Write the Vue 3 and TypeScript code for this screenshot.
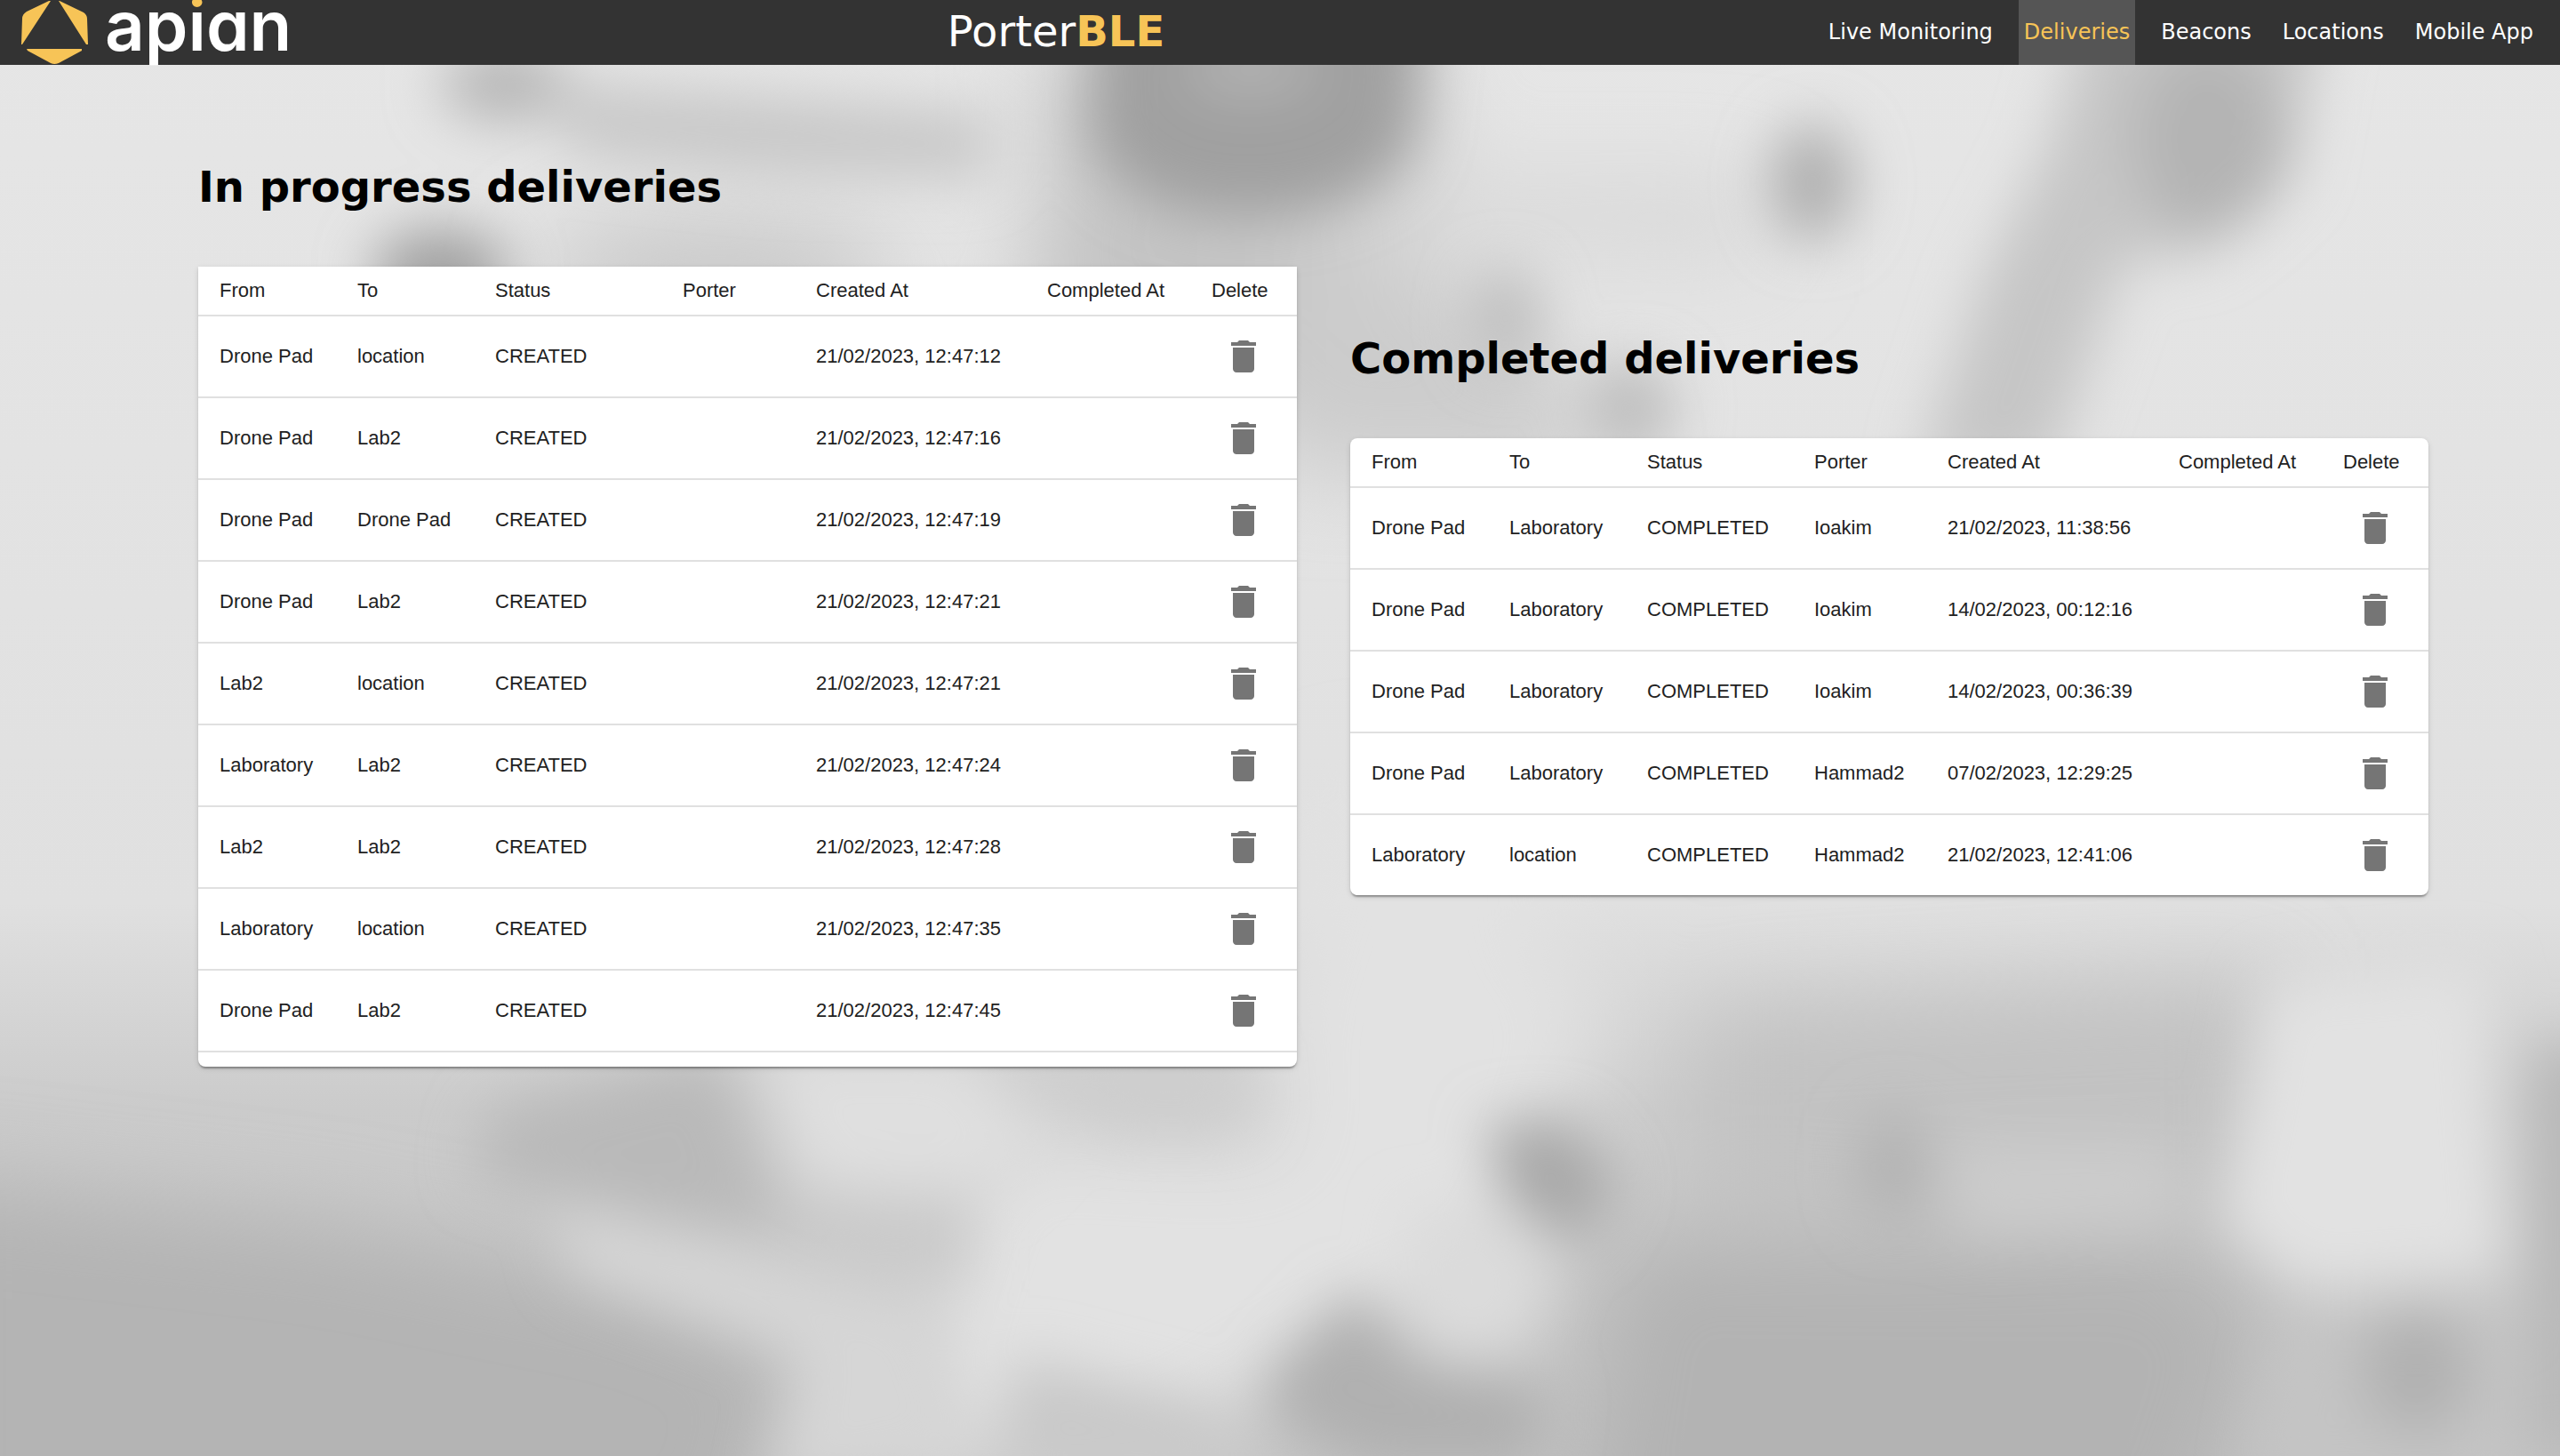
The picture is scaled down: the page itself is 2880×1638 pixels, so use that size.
<script setup lang="ts">
interface Delivery {
  from: string
  to: string
  status: string
  porter: string
  createdAt: string
  completedAt: string
}

interface Panel {
  id: string
  title: string
  rows: Delivery[]
}

const links: string[] = ['Live Monitoring', 'Deliveries', 'Beacons', 'Locations', 'Mobile App']
const active = 'Deliveries'

const headings: string[] = ['From', 'To', 'Status', 'Porter', 'Created At', 'Completed At', 'Delete']

function delivery(from: string, to: string, status: string, porter: string, createdAt: string): Delivery {
  return { from, to, status, porter, createdAt, completedAt: '' }
}

const panels: Panel[] = [
  {
    id: 'progress',
    title: 'In progress deliveries',
    rows: [
      delivery('Drone Pad', 'location', 'CREATED', '', '21/02/2023, 12:47:12'),
      delivery('Drone Pad', 'Lab2', 'CREATED', '', '21/02/2023, 12:47:16'),
      delivery('Drone Pad', 'Drone Pad', 'CREATED', '', '21/02/2023, 12:47:19'),
      delivery('Drone Pad', 'Lab2', 'CREATED', '', '21/02/2023, 12:47:21'),
      delivery('Lab2', 'location', 'CREATED', '', '21/02/2023, 12:47:21'),
      delivery('Laboratory', 'Lab2', 'CREATED', '', '21/02/2023, 12:47:24'),
      delivery('Lab2', 'Lab2', 'CREATED', '', '21/02/2023, 12:47:28'),
      delivery('Laboratory', 'location', 'CREATED', '', '21/02/2023, 12:47:35'),
      delivery('Drone Pad', 'Lab2', 'CREATED', '', '21/02/2023, 12:47:45'),
    ],
  },
  {
    id: 'completed',
    title: 'Completed deliveries',
    rows: [
      delivery('Drone Pad', 'Laboratory', 'COMPLETED', 'Ioakim', '21/02/2023, 11:38:56'),
      delivery('Drone Pad', 'Laboratory', 'COMPLETED', 'Ioakim', '14/02/2023, 00:12:16'),
      delivery('Drone Pad', 'Laboratory', 'COMPLETED', 'Ioakim', '14/02/2023, 00:36:39'),
      delivery('Drone Pad', 'Laboratory', 'COMPLETED', 'Hammad2', '07/02/2023, 12:29:25'),
      delivery('Laboratory', 'location', 'COMPLETED', 'Hammad2', '21/02/2023, 12:41:06'),
    ],
  },
]
</script>

<template>
  <div class="page">
    <svg class="backdrop" viewBox="0 0 1568 892" preserveAspectRatio="xMidYMid slice" aria-hidden="true">
      <defs>
        <linearGradient id="base" x1="0" y1="0" x2="0" y2="1">
          <stop offset="0" stop-color="#e6e6e6" />
          <stop offset="0.62" stop-color="#e0e0e0" />
          <stop offset="0.76" stop-color="#cbcbcb" />
          <stop offset="1" stop-color="#c4c4c4" />
        </linearGradient>
        <filter id="soft" x="-60%" y="-60%" width="220%" height="220%"><feGaussianBlur stdDeviation="17" /></filter>
        <filter id="wide" x="-60%" y="-60%" width="220%" height="220%"><feGaussianBlur stdDeviation="28" /></filter>
      </defs>
      <rect width="1568" height="892" fill="url(#base)" />
      <g filter="url(#wide)">
        <path d="M640 30L880 30L860 180L790 260L620 200L640 130Z" fill="#c4c4c4" />
        <ellipse cx="440" cy="168" rx="110" ry="34" fill="#c8c8c8" />
        <path d="M780 140L860 150L960 230L990 290L780 290Z" fill="#cccccc" />
        <path d="M800 110L1080 110L1080 160L830 150Z" fill="#d8d8d8" />
        <path d="M-60 720L200 750L400 790L490 830L450 960L-60 960Z" fill="#b4b4b4" />
        <path d="M1040 620L1390 600L1390 760L1040 740Z" fill="#c2c2c2" />
        <path d="M990 760L1340 765L1390 810L1340 960L960 960Z" fill="#b3b3b3" />
        <path d="M600 690L800 700L900 560L990 600L930 780L780 850L720 892L540 892Z" fill="#e2e2e2" />
        <path d="M820 480L960 480L900 740L800 760L770 640Z" fill="#e2e2e2" />
      </g>
      <g filter="url(#soft)">
        <ellipse cx="310" cy="52" rx="40" ry="22" fill="#b4b4b4" />
        <path d="M330 50L450 58L610 70L605 110L480 108L350 95Z" fill="#c8c8c8" />
        <path d="M670 0L874 0L864 90Q835 132 764 132Q690 132 668 84Z" fill="#a0a0a0" />
        <ellipse cx="766" cy="42" rx="40" ry="16" fill="#b4b4b4" />
        <ellipse cx="270" cy="168" rx="42" ry="28" fill="#a0a0a0" />
        <ellipse cx="1110" cy="112" rx="25" ry="36" fill="#aeaeae" />
        <path d="M1280 0L1424 0L1404 110L1350 155L1300 160L1255 290L1175 290L1215 170L1255 90Z" fill="#c6c6c6" />
        <ellipse cx="1352" cy="85" rx="46" ry="60" fill="#b4b4b4" />
        <ellipse cx="922" cy="195" rx="20" ry="30" fill="#bdbdbd" />
        <ellipse cx="998" cy="250" rx="28" ry="28" fill="#bdbdbd" />
        <path d="M300 680L440 645L480 755L400 750L290 720Z" fill="#b9b9b9" />
        <path d="M465 640L590 640L640 700L600 735L490 725Z" fill="#dfdfdf" />
        <path d="M620 640L760 640L765 690L680 690Z" fill="#cecece" />
        <path d="M490 730L590 730L590 785L510 775Z" fill="#cacaca" />
        <path d="M340 735L440 760L570 800L600 892L470 920L490 830L350 780Z" fill="#d6d6d6" />
        <path d="M620 830L740 860L780 910L610 910Z" fill="#c9c9c9" />
        <path d="M910 688L962 686L992 725L967 765L925 740Z" fill="#a8a8a8" />
        <path d="M780 840L830 790L870 835L950 850L940 900L840 900L775 870Z" fill="#b0b0b0" />
        <path d="M860 740L920 740L950 780L930 830L870 830Z" fill="#dbdbdb" />
        <path d="M1190 700L1330 700L1340 750L1200 755Z" fill="#cccccc" />
        <ellipse cx="1160" cy="715" rx="22" ry="34" fill="#b2b2b2" />
        <path d="M1390 600L1520 590L1535 780L1410 790L1360 750Z" fill="#e2e2e2" />
        <path d="M1550 640L1600 640L1600 892L1550 892Z" fill="#b8b8b8" />
        <path d="M1400 810L1540 810L1540 910L1380 910Z" fill="#c4c4c4" />
        <ellipse cx="1480" cy="840" rx="34" ry="38" fill="#b1b1b1" />
      </g>
    </svg>

    <header class="bar">
      <a class="brand" href="#" aria-label="apian">
        <svg class="emblem" width="118" height="73" viewBox="0 0 118 73" aria-hidden="true">
          <path d="M55 1H57L25 50H24L25 21Q25 16 30 13Z" />
          <path d="M67 1H66L97 50H99L98 21Q98 17 94 14Z" />
          <path d="M30 55H92V57L66 71Q61 73 57 71L31 57Z" />
        </svg>
        <span class="word">ap<span class="stem">i</span><span class="round">a</span>n</span>
      </a>
      <div class="product">Porter<b>BLE</b></div>
      <nav class="nav">
        <a v-for="link in links" :key="link" href="#" :class="{ active: link === active }">{{ link }}</a>
      </nav>
    </header>

    <main class="content">
      <section v-for="panel in panels" :key="panel.id" :class="panel.id">
        <h1 :id="panel.id">{{ panel.title }}</h1>
        <div class="card">
          <table :aria-labelledby="panel.id">
            <colgroup>
              <col class="place" /><col class="place" /><col class="status" /><col class="porter" />
              <col class="created" /><col class="finished" /><col class="action" />
            </colgroup>
            <thead>
              <tr>
                <th v-for="heading in headings" :key="heading" scope="col">{{ heading }}</th>
              </tr>
            </thead>
            <tbody>
              <tr v-for="row in panel.rows" :key="row.createdAt + row.from">
                <td>{{ row.from }}</td>
                <td>{{ row.to }}</td>
                <td>{{ row.status }}</td>
                <td>{{ row.porter }}</td>
                <td>{{ row.createdAt }}</td>
                <td>{{ row.completedAt }}</td>
                <td>
                  <button type="button" aria-label="Delete delivery">
                    <svg width="48" height="48" viewBox="0 0 24 24" aria-hidden="true">
                      <path d="M6 19c0 1.1.9 2 2 2h8c1.1 0 2-.9 2-2V7H6v12zM19 4h-3.5l-1-1h-5l-1 1H5v2h14V4z" />
                    </svg>
                  </button>
                </td>
              </tr>
            </tbody>
          </table>
        </div>
      </section>
    </main>
  </div>
</template>

<style>
body {
  margin: 0;
}
</style>

<style scoped>
.page {
  position: relative;
  min-height: 100vh;
  font-family: Verdana, 'DejaVu Sans', sans-serif;
}

.backdrop {
  position: absolute;
  inset: 0;
  width: 100%;
  height: 100%;
}

.bar {
  position: relative;
  display: grid;
  grid-template-columns: 1fr auto 1fr;
  align-items: center;
  height: 73px;
  background: #333;
  color: #fff;
}

.brand {
  display: flex;
  height: 73px;
  color: #fff;
  text-decoration: none;
}

.emblem {
  flex: none;
  fill: #f7c457;
}

.word {
  font: 600 78px/58px Inter, sans-serif;
}

.stem {
  background: linear-gradient(#f7c457 34%, #fff 34%);
  background-clip: text;
  color: transparent;
}

.round {
  font-feature-settings: 'cv11';
}

.product {
  margin-right: 504px;
  padding-bottom: 4px;
  font-size: 48px;
  line-height: 56px;
  white-space: nowrap;
}

.product b {
  color: #f7c457;
}

.nav {
  display: flex;
  justify-content: flex-end;
  gap: 23px;
  padding-right: 24px;
  white-space: nowrap;
}

.nav a {
  padding: 0 6px;
  color: #fff;
  font-size: 24px;
  line-height: 73px;
  text-decoration: none;
}

.nav .active {
  background: #555;
  color: #f7c457;
}

.content {
  position: relative;
  display: grid;
  grid-template-columns: 1236fr 1213fr;
  align-items: center;
  gap: 60px;
  padding: 109px 148px 0 223px;
}

h1 {
  margin: 0 0 62px;
  color: #000;
  font-size: 48px;
  line-height: 56px;
}

.card {
  overflow: hidden;
  border-radius: 8px;
  background: #fff;
  box-shadow: 0 4px 2px -2px rgba(0, 0, 0, 0.2), 0 2px 2px rgba(0, 0, 0, 0.14), 0 2px 6px rgba(0, 0, 0, 0.12);
}

.progress .card {
  padding-bottom: 16px;
  border-radius: 0 0 8px 8px;
}

table {
  width: 100%;
  border-collapse: separate;
  border-spacing: 0;
  table-layout: fixed;
  color: #212121;
  font: 22px/32px 'Liberation Sans', Arial, sans-serif;
}

.place {
  width: 155px;
}

.status {
  width: 188px;
}

.progress .status {
  width: 211px;
}

.porter {
  width: 150px;
}

.created {
  width: 260px;
}

.finished {
  width: 185px;
}

.action {
  width: 120px;
}

th,
td {
  box-sizing: border-box;
  height: 92px;
  padding: 0 0 0 24px;
  border-bottom: 2px solid #e0e0e0;
  font-weight: 400;
  text-align: left;
  white-space: nowrap;
}

th {
  height: 56px;
}

.completed tbody tr:last-child td {
  height: 90px;
  border-bottom: 0;
}

button {
  display: block;
  padding: 12px;
  border: 0;
  border-radius: 50%;
  background: none;
  cursor: pointer;
}

button svg {
  display: block;
  fill: #757575;
}
</style>
